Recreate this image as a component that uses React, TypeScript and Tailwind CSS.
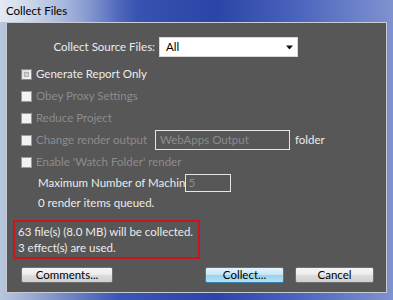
import React from "react";

const font = { fontFamily: 'Lato, "Noto Sans", sans-serif' };

function Check({ disabled }: { disabled?: boolean }) {
  return (
    <div
      className={
        "w-[11px] h-[11px] shrink-0 border " +
        (disabled
          ? "border-[#9a9a9a] bg-[#f2f2f2]"
          : "border-[#8a8a8a] bg-[linear-gradient(135deg,#d9d9d9,#f8f8f8)] p-[2px]")
      }
    >
      {!disabled && <div className="w-full h-full bg-[linear-gradient(135deg,#c4c4c4,#e2e2e2)] border border-[#b0b0b0]" />}
    </div>
  );
}

function Btn({ label, w, primary }: { label: string; w: string; primary?: boolean }) {
  return (
    <div
      className={
        "h-[16px] flex items-center justify-center rounded-[2px] border text-[11.5px] text-black leading-none " +
        w +
        (primary
          ? " border-[#3c7fb1] bg-[linear-gradient(#e5f4fc_0%,#c4e5f6_50%,#98d1ef_51%,#b6e0f4_100%)]"
          : " border-[#707070] bg-[linear-gradient(#f6f6f6_0%,#ebebeb_50%,#dddddd_51%,#cfcfcf_100%)]")
      }
    >
      {label}
    </div>
  );
}

export default function App() {
  return (
    <div
      className="w-[393px] h-[300px] flex flex-col overflow-hidden bg-[linear-gradient(90deg,#b9c7dd_0%,#8fa3cf_10%,#3c56b4_30%,#2c44a6_55%,#4a63bc_75%,#7f92d0_100%)]"
      style={font}
    >
      <div className="h-[22px] shrink-0 flex items-center pl-[6px] text-[11.5px] text-black bg-[linear-gradient(90deg,rgba(235,240,248,0.85)_0%,rgba(220,228,242,0.6)_12%,rgba(255,255,255,0)_35%)]">
        Collect Files
      </div>
      <div className="flex-1 mx-[6px] mb-[7px] border border-[#c8cbd4] bg-[#575757] flex flex-col text-[11.5px] text-[#ececec] whitespace-nowrap">
        <div className="mt-[14px] h-[20px] flex items-center">
          <div className="w-[152px] text-right pr-[4px]">Collect Source Files:</div>
          <div className="w-[139px] h-[20px] bg-white border border-[#d8d8d8] flex items-center justify-between pl-[6px] pr-[4px] text-black">
            <span>All</span>
            <svg width="7" height="5" viewBox="0 0 7 5">
              <path d="M0 0.5 H7 L3.5 4.5 Z" fill="#111" />
            </svg>
          </div>
        </div>
        <div className="mt-[6px] flex flex-col pl-[14px]">
          <div className="h-[22px] flex items-center gap-[4px]">
            <Check />
            <span>Generate Report Only</span>
          </div>
          <div className="h-[22px] flex items-center gap-[4px] text-[#8c8c8c]">
            <Check disabled />
            <span>Obey Proxy Settings</span>
          </div>
          <div className="h-[22px] flex items-center gap-[4px] text-[#8c8c8c]">
            <Check disabled />
            <span>Reduce Project</span>
          </div>
          <div className="h-[22px] flex items-center gap-[4px] text-[#8c8c8c]">
            <Check disabled />
            <span className="w-[115px]">Change render output</span>
            <div className="w-[135px] h-[20px] border border-[#e6e6e6] flex items-center pl-[4px] text-[#8c8c8c]">
              WebApps Output
            </div>
            <span className="text-[#ececec] ml-[1px]">folder</span>
          </div>
          <div className="h-[22px] flex items-center gap-[4px] text-[#8c8c8c]">
            <Check disabled />
            <span>Enable 'Watch Folder' render</span>
          </div>
          <div className="h-[20px] flex items-center pl-[17px]">
            <span>Maximum Number of Machin</span>
            <div className="w-[46px] h-[18px] border border-[#e6e6e6] flex items-center pl-[2px] text-[#8c8c8c]">5</div>
          </div>
          <div className="h-[19px] flex items-center pl-[17px]">0 render items queued.</div>
        </div>
        <div className="mt-[8px] ml-[6px] w-[187px] h-[39px] border-2 border-[#c8161e] flex flex-col justify-center pl-[3px] leading-[16px]">
          <span>63 file(s) (8.0 MB) will be collected.</span>
          <span>3 effect(s) are used.</span>
        </div>
        <div className="mt-[8px] flex items-center pl-[14px]">
          <Btn label="Comments..." w="w-[92px]" />
          <div className="w-[92px]" />
          <Btn label="Collect..." w="w-[79px]" primary />
          <div className="w-[11px]" />
          <Btn label="Cancel" w="w-[79px]" />
        </div>
      </div>
    </div>
  );
}
